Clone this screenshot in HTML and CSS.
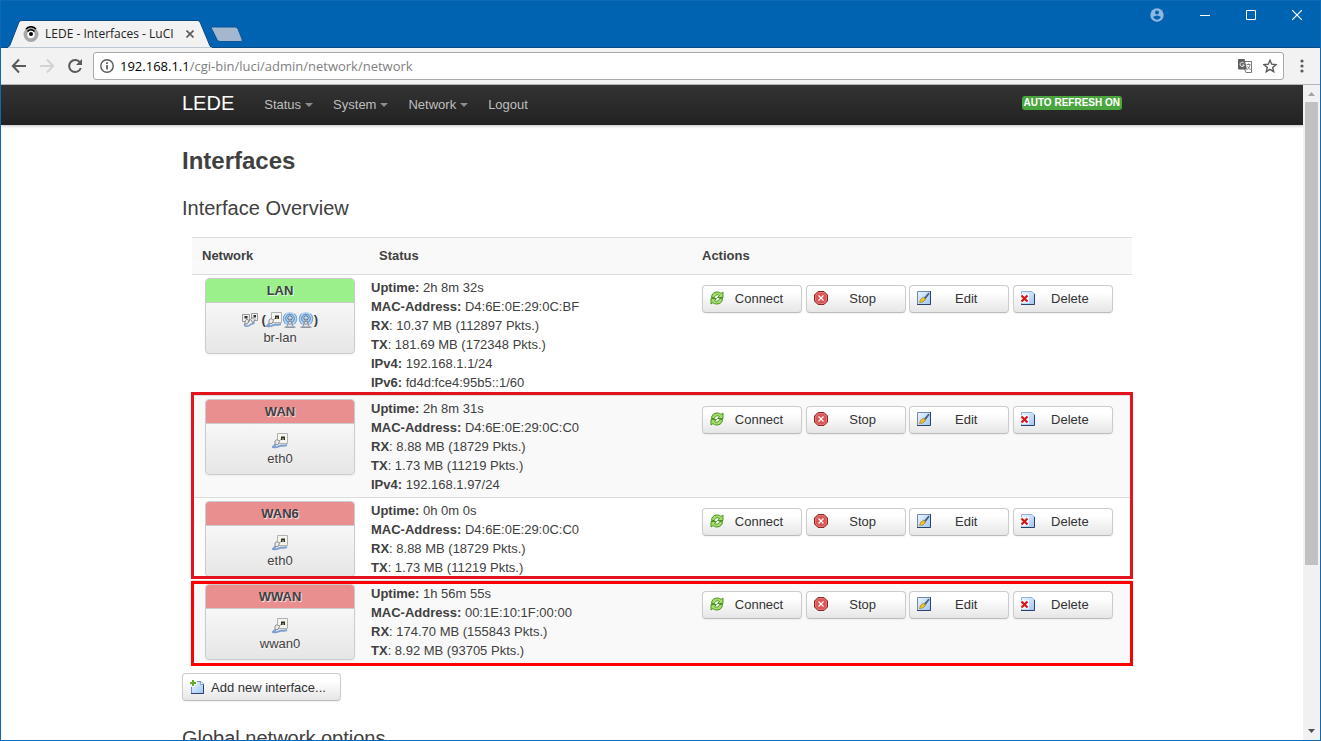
FILE: index.html
```
<!DOCTYPE html>
<html lang="en">
<head>
    <meta charset="UTF-8">
    <title>LEDE - Interfaces - LuCI</title>
    <link rel="stylesheet" href="styles.css">
</head>
<body>

<svg class="sprite" aria-hidden="true">
    <linearGradient id="doc-fill" x1="0" y1="0" x2="1" y2="1">
        <stop offset="0" stop-color="#eef6ff"/>
        <stop offset="1" stop-color="#9cc6f5"/>
    </linearGradient>
    <symbol id="reload" viewBox="0 0 16 16">
        <path d="M2.500 7.500C2.500 4 5 2 8 2c2 0 3 .5 4 1.500l2-1.500v5.500H8.500l2-2C8.500 4 6 5 5.500 7.500z" fill="#a5dc6c" stroke="#4a9420"/>
        <path d="M13.500 8.500C13.500 12 11 14 8 14c-2 0-3-.5-4-1.500L2 14V8.500h5.500l-2 2c2 1.500 4.500.5 5-2z" fill="#a5dc6c" stroke="#4a9420"/>
    </symbol>
    <symbol id="stop" viewBox="0 0 16 16">
        <path d="M5 1.500h6L14.500 5v6L11 14.500H5L1.500 11V5z" fill="#d95757" stroke="#8e2525"/>
        <path d="M5.500 2.500h5L13.500 5.500v5L10.500 13.500h-5L2.500 10.500v-5z" fill="none" stroke="#e88f8f" stroke-width=".6"/>
        <path d="M5.500 5.500l5 5m0-5l-5 5" stroke="#fff" stroke-width="1.200"/>
    </symbol>
    <symbol id="edit" viewBox="0 0 16 16">
        <path d="M1.500 1.500h13v13h-13z" fill="url(#doc-fill)" stroke="#7089ad"/>
        <path d="M14.500 1v13.500H1" fill="none" stroke="#2c4268"/>
        <path d="M6.500 9.500L12.500 2.500l1.200 1.200L8 11z" fill="#4a5f80"/>
        <path d="M3.500 12.500l1.200-3.300L7.500 7l2 2-2.500 3z" fill="#f3c22c" stroke="#9b7416" stroke-width=".6"/>
    </symbol>
    <symbol id="delete" viewBox="0 0 16 16">
        <path d="M1.500 1.500H12l2.500 2.500v10.500h-13z" fill="url(#doc-fill)" stroke="#8fb0d8"/>
        <path d="M14.500 4v10.500H1" fill="none" stroke="#2c4268"/>
        <path d="M0 4h9v9H0z" fill="#fff" opacity=".7"/>
        <path d="M1.500 5.500l6 6m0-6l-6 6" stroke="#d41919" stroke-width="2.200"/>
    </symbol>
    <symbol id="add" viewBox="0 0 16 16">
        <path d="M2.500 2.500h9.500l2.500 2.500v9.500h-12z" fill="url(#doc-fill)" stroke="#6b8fc0"/>
        <path d="M14.500 5v9.500H2" fill="none" stroke="#2c4268"/>
        <path d="M11.500 2.500v3h3" fill="#fff" stroke="#6b8fc0" stroke-width=".8"/>
        <path d="M4 0v8M0 4h8" stroke="#fff" stroke-width="4"/>
        <path d="M4 1v6M1 4h6" stroke="#5fb01c" stroke-width="2"/>
    </symbol>
    <symbol id="ethernet" viewBox="0 0 16 16">
        <path d="M5.500 .5h10v10h-10z" fill="#f4f4f0" stroke="#b0b0ac"/>
        <path d="M9 3.500h4V7H9z" fill="#33322a"/>
        <path d="M10 5h2v2h-2z" fill="#8a8250"/>
        <path d="M3 8l2-1.500 2.500 2-1.500 3H3z" fill="#ececec" stroke="#777" stroke-width=".8"/>
        <path d="M7 8L9 6.500" stroke="#999"/>
        <path d="M3.500 11.500L1 14c4 1.500 6-1.500 9-1.500 2 .5 3.500 0 5-.5" fill="none" stroke="#7d9fce" stroke-width="2"/>
    </symbol>
    <symbol id="bridge" viewBox="0 0 16 16">
        <path d="M.5 2.500h7v7h-7zM9.500 1.500h6v7h-6z" fill="#f0f0ee" stroke="#999"/>
        <path d="M2.500 4h3v2.500h-3zM11.500 3h2.500v2.500h-2.500z" fill="#333"/>
        <path d="M3 9l2-2 2 1.500-1.500 3.500H3zM8.500 7.500L11 5.500l2 2-2 3.500z" fill="#e4e4e4" stroke="#777" stroke-width=".8"/>
        <path d="M3 11.500c-2 3 3 3.500 5 1.500s5-.5 3.500-3.500" fill="none" stroke="#7d9fce" stroke-width="1.600"/>
    </symbol>
    <symbol id="wifi" viewBox="0 0 16 16">
        <circle cx="8" cy="7" r="7" fill="#b4d2ee"/>
        <path d="M3.500 1.500q-4.500 5 0 10.500M12.500 1.500q4.500 5 0 10.500" fill="none" stroke="#6c9fd2"/>
        <circle cx="8" cy="6.500" r="4.300" fill="none" stroke="#4d86c4"/>
        <circle cx="8" cy="6" r="2.200" fill="#dceaf7" stroke="#4a6b94"/>
        <path d="M8 6.500L4.500 15.500h7zM5.500 12h5M6.500 9.500h3" fill="#dfe3e8" stroke="#7a838e" stroke-width=".8"/>
        <path d="M2.500 15.200h11" stroke="#8994a0" stroke-width="1.200"/>
    </symbol>
</svg>

<header class="titlebar">
    <div class="tab">
        <svg class="tab-shape" viewBox="0 0 206 28">
            <path d="M0 28L1 27Q2 27 3 25L12 2Q13 .5 15 .5H190Q192 .5 193 2L203 26Q204 27.500 206 28z" fill="#f2f2f2" stroke="#0a4b85"/>
            <path d="M1 28h204" stroke="#f2f2f2"/>
        </svg>
        <svg class="favicon" viewBox="0 0 16 16">
            <circle cx="8" cy="8.500" r="7.500" fill="#a8a8ab"/>
            <circle cx="8" cy="8.500" r="3.700" fill="#fff"/>
            <circle cx="8" cy="8" r="2" fill="#000"/>
            <path d="M4.500 5.500Q8 2 11.500 5.500M3 3Q8-1.500 13 3" fill="none" stroke="#000" stroke-width="1.600"/>
        </svg>
        <span class="tab-title">LEDE - Interfaces - LuCI</span>
        <button class="tab-close" aria-label="Close tab">
            <svg width="8" height="8" viewBox="0 0 8 8"><path d="M.5.5l7 7m0-7l-7 7" stroke="#5a5a5a" stroke-width="1.600"/></svg>
        </button>
    </div>
    <button class="new-tab" aria-label="New tab">
        <svg width="34" height="17" viewBox="0 0 34 17"><path d="M2 1H25Q27 1 28 3L32 13Q33 15.500 31 15.500H10Q8 15.500 7 13.500L1.500 2.500Q1 1 2 1z" fill="#a3b8cf" stroke="#0c5598"/></svg>
    </button>
    <div class="window-controls">
        <button class="account" aria-label="Account">
            <svg width="14" height="14" viewBox="0 0 14 14"><circle cx="7" cy="7" r="6.700" fill="#8fb8de"/><circle cx="7" cy="4.500" r="2" fill="#0063b1"/><path d="M3 9q4-3 8 0q-1.500 2.700-4 2.700T3 9z" fill="#0063b1"/></svg>
        </button>
        <button aria-label="Minimize">
            <svg width="10" height="10" viewBox="0 0 10 10"><path d="M0 5.500h10" stroke="#fff"/></svg>
        </button>
        <button aria-label="Maximize">
            <svg width="10" height="10" viewBox="0 0 10 10"><path d="M.5.5h9v9h-9z" fill="none" stroke="#fff"/></svg>
        </button>
        <button aria-label="Close">
            <svg width="10" height="10" viewBox="0 0 10 10"><path d="M0 0l10 10m0-10L0 10" stroke="#fff" stroke-width="1.200"/></svg>
        </button>
    </div>
</header>

<div class="toolbar">
    <button class="tool" aria-label="Back">
        <svg width="16" height="16" viewBox="0 0 16 16"><path d="M15 8H2M8 1.500L1.800 8 8 14.500" fill="none" stroke="#5a5a5a" stroke-width="2"/></svg>
    </button>
    <button class="tool" aria-label="Forward" disabled>
        <svg width="16" height="16" viewBox="0 0 16 16"><path d="M1 8h13M8 1.500L14.200 8 8 14.500" fill="none" stroke="#d3d3d3" stroke-width="2"/></svg>
    </button>
    <button class="tool" aria-label="Reload">
        <svg width="16" height="16" viewBox="0 0 16 16"><path d="M13 4.500A6 6 0 1 0 13.800 10" fill="none" stroke="#5a5a5a" stroke-width="2"/><path d="M15 1v6H9z" fill="#5a5a5a"/></svg>
    </button>
    <div class="address">
        <svg class="info" width="14" height="14" viewBox="0 0 14 14"><circle cx="7" cy="7" r="6.200" fill="none" stroke="#5a5a5a" stroke-width="1.400"/><path d="M7 6v4.500M7 3.300v1.600" stroke="#5a5a5a" stroke-width="1.700"/></svg>
        <label class="host" for="url">192.168.1.1</label>
        <input class="path" id="url" type="text" value="/cgi-bin/luci/admin/network/network">
        <button class="address-button" aria-label="Translate">
            <svg width="14" height="14" viewBox="0 0 14 14"><path d="M6 2.500h7.500v11H8L6.500 10" fill="#fff" stroke="#777"/><path d="M1 0h5.500L9 10.500H1q-1 0-1-1V1q0-1 1-1z" fill="#5f5f5f"/><path d="M6 4.300A2.100 2.100 0 1 0 6.200 6H4.500" fill="none" stroke="#fff"/><path d="M8.500 5.500h4M10.500 4.500v1M12 6q-.5 3-3 4.500M9.500 7.500l3 3.500" fill="none" stroke="#777" stroke-width=".9"/></svg>
        </button>
        <button class="address-button" aria-label="Bookmark">
            <svg width="14" height="14" viewBox="0 0 14 14"><path d="M7 1.200l1.700 4 4.300.4-3.300 2.800 1 4.300L7 10.400l-3.700 2.300 1-4.300L1 5.600l4.300-.4z" fill="none" stroke="#5a5a5a" stroke-width="1.400"/></svg>
        </button>
    </div>
    <button class="menu" aria-label="Menu">
        <svg width="4" height="14" viewBox="0 0 4 14"><circle cx="2" cy="2" r="1.600" fill="#5a5a5a"/><circle cx="2" cy="7" r="1.600" fill="#5a5a5a"/><circle cx="2" cy="12" r="1.600" fill="#5a5a5a"/></svg>
    </button>
</div>

<div class="viewport">
    <div class="page">
        <nav class="navbar">
            <div class="container nav-inner">
                <a class="brand" href="#">LEDE</a>
                <a class="nav-link dropdown" href="#">Status</a>
                <a class="nav-link dropdown" href="#">System</a>
                <a class="nav-link dropdown" href="#">Network</a>
                <a class="nav-link" href="#">Logout</a>
                <button class="refresh">AUTO REFRESH ON</button>
            </div>
        </nav>

        <main class="container">
            <h2>Interfaces</h2>
            <h3>Interface Overview</h3>
            <table class="interfaces">
                <thead>
                <tr>
                    <th class="col-network">Network</th>
                    <th class="col-status">Status</th>
                    <th>Actions</th>
                </tr>
                </thead>
                <tbody>
                <tr>
                    <td>
                        <div class="ifacebox">
                            <div class="ifacebox-head lan">LAN</div>
                            <div class="ifacebox-body">
                                <div class="devices"><svg class="icon"><use href="#bridge"/></svg>&nbsp;<b>(</b><svg class="icon"><use href="#ethernet"/></svg><svg class="icon"><use href="#wifi"/></svg><svg class="icon"><use href="#wifi"/></svg><b>)</b></div>
                                br-lan
                            </div>
                        </div>
                    </td>
                    <td>
                        <b>Uptime:</b> 2h 8m 32s<br>
                        <b>MAC-Address:</b> D4:6E:0E:29:0C:BF<br>
                        <b>RX</b>: 10.37 MB (112897 Pkts.)<br>
                        <b>TX</b>: 181.69 MB (172348 Pkts.)<br>
                        <b>IPv4:</b> 192.168.1.1/24<br>
                        <b>IPv6:</b> fd4d:fce4:95b5::1/60
                    </td>
                    <td class="actions">
                        <button class="btn"><svg class="icon"><use href="#reload"/></svg><span>Connect</span></button>
                        <button class="btn"><svg class="icon"><use href="#stop"/></svg><span>Stop</span></button>
                        <button class="btn"><svg class="icon"><use href="#edit"/></svg><span>Edit</span></button>
                        <button class="btn"><svg class="icon"><use href="#delete"/></svg><span>Delete</span></button>
                    </td>
                </tr>
                </tbody>
                <tbody class="marked marked-wan">
                <tr class="odd">
                    <td>
                        <div class="ifacebox">
                            <div class="ifacebox-head wan">WAN</div>
                            <div class="ifacebox-body">
                                <div class="devices"><svg class="icon"><use href="#ethernet"/></svg></div>
                                eth0
                            </div>
                        </div>
                    </td>
                    <td>
                        <b>Uptime:</b> 2h 8m 31s<br>
                        <b>MAC-Address:</b> D4:6E:0E:29:0C:C0<br>
                        <b>RX</b>: 8.88 MB (18729 Pkts.)<br>
                        <b>TX</b>: 1.73 MB (11219 Pkts.)<br>
                        <b>IPv4:</b> 192.168.1.97/24
                    </td>
                    <td class="actions">
                        <button class="btn"><svg class="icon"><use href="#reload"/></svg><span>Connect</span></button>
                        <button class="btn"><svg class="icon"><use href="#stop"/></svg><span>Stop</span></button>
                        <button class="btn"><svg class="icon"><use href="#edit"/></svg><span>Edit</span></button>
                        <button class="btn"><svg class="icon"><use href="#delete"/></svg><span>Delete</span></button>
                    </td>
                </tr>
                <tr>
                    <td>
                        <div class="ifacebox">
                            <div class="ifacebox-head wan">WAN6</div>
                            <div class="ifacebox-body">
                                <div class="devices"><svg class="icon"><use href="#ethernet"/></svg></div>
                                eth0
                            </div>
                        </div>
                    </td>
                    <td>
                        <b>Uptime:</b> 0h 0m 0s<br>
                        <b>MAC-Address:</b> D4:6E:0E:29:0C:C0<br>
                        <b>RX</b>: 8.88 MB (18729 Pkts.)<br>
                        <b>TX</b>: 1.73 MB (11219 Pkts.)
                    </td>
                    <td class="actions">
                        <button class="btn"><svg class="icon"><use href="#reload"/></svg><span>Connect</span></button>
                        <button class="btn"><svg class="icon"><use href="#stop"/></svg><span>Stop</span></button>
                        <button class="btn"><svg class="icon"><use href="#edit"/></svg><span>Edit</span></button>
                        <button class="btn"><svg class="icon"><use href="#delete"/></svg><span>Delete</span></button>
                    </td>
                </tr>
                </tbody>
                <tbody class="marked marked-wwan">
                <tr class="odd">
                    <td>
                        <div class="ifacebox">
                            <div class="ifacebox-head wan">WWAN</div>
                            <div class="ifacebox-body">
                                <div class="devices"><svg class="icon"><use href="#ethernet"/></svg></div>
                                wwan0
                            </div>
                        </div>
                    </td>
                    <td>
                        <b>Uptime:</b> 1h 56m 55s<br>
                        <b>MAC-Address:</b> 00:1E:10:1F:00:00<br>
                        <b>RX</b>: 174.70 MB (155843 Pkts.)<br>
                        <b>TX</b>: 8.92 MB (93705 Pkts.)
                    </td>
                    <td class="actions">
                        <button class="btn"><svg class="icon"><use href="#reload"/></svg><span>Connect</span></button>
                        <button class="btn"><svg class="icon"><use href="#stop"/></svg><span>Stop</span></button>
                        <button class="btn"><svg class="icon"><use href="#edit"/></svg><span>Edit</span></button>
                        <button class="btn"><svg class="icon"><use href="#delete"/></svg><span>Delete</span></button>
                    </td>
                </tr>
                </tbody>
            </table>
            <button class="btn btn-add"><svg class="icon"><use href="#add"/></svg><span>Add new interface...</span></button>
            <h3>Global network options</h3>
        </main>
    </div>
    <div class="scrollbar">
        <svg width="17" height="17" viewBox="0 0 17 17"><path d="M5 11l3.500-4 3.500 4z" fill="#a3a3a3"/></svg>
        <div class="track">
            <div class="thumb"></div>
        </div>
        <svg width="17" height="17" viewBox="0 0 17 17"><path d="M5 6l3.500 4L12 6z" fill="#505050"/></svg>
    </div>
</div>

</body>
</html>
```
FILE: styles.css
```
* {
    box-sizing: border-box;
}

body {
    margin: 0;
    height: 100vh;
    display: flex;
    flex-direction: column;
    overflow: hidden;
    border: 1px solid #0e69b4;
    font: 13px/19px "Liberation Sans", Arial, sans-serif;
    color: #404040;
    background: #fff;
}

button {
    font: inherit;
    color: inherit;
    margin: 0;
    padding: 0;
    border: 0;
    background: none;
}

.sprite {
    position: absolute;
    width: 0;
    height: 0;
}

/* browser window */
.titlebar {
    display: flex;
    flex: none;
    height: 47px;
    background: #0063b1;
    border-bottom: 1px solid #0a4b85;
}

.tab {
    position: relative;
    display: flex;
    align-items: center;
    width: 206px;
    height: 28px;
    margin: 19px 0 0 6px;
    padding: 0 19px 0 16px;
    font: 12px/16px "Open Sans", "Noto Sans", sans-serif;
    color: #222;
}

.tab-shape {
    position: absolute;
    inset: 0;
}

.favicon {
    position: relative;
    width: 16px;
    height: 16px;
    margin-right: 6px;
}

.tab-title {
    position: relative;
    flex: 1;
    white-space: nowrap;
}

.tab-close {
    position: relative;
    display: flex;
}

.new-tab {
    display: flex;
    align-self: flex-end;
    margin: 0 0 4px -3px;
}

.window-controls {
    display: flex;
    margin-left: auto;
    height: 28px;
}

.window-controls button {
    display: flex;
    align-items: center;
    justify-content: center;
    width: 46px;
}

.window-controls .account {
    width: 50px;
}

.toolbar {
    display: flex;
    flex: none;
    align-items: center;
    height: 37px;
    padding-left: 4px;
    background: #f2f2f2;
    border-bottom: 1px solid #b5b5b5;
}

.tool {
    display: flex;
    justify-content: center;
    width: 28px;
}

.address {
    display: flex;
    flex: 1;
    align-items: center;
    height: 28px;
    margin-left: 4px;
    padding: 0 6px;
    background: #fff;
    border: 1px solid #a9a9a9;
    border-radius: 3px;
    font: 13px/18px "Open Sans", "Noto Sans", sans-serif;
}

.info {
    margin-right: 6px;
}

.host {
    color: #000;
}

.path {
    flex: 1;
    padding: 0;
    border: 0;
    outline: 0;
    font: inherit;
    color: #808080;
}

.address-button {
    display: flex;
    margin-left: 11px;
}

.menu {
    display: flex;
    justify-content: center;
    width: 36px;
}

/* page */
.viewport {
    display: flex;
    flex: 1;
    min-height: 0;
}

.page {
    flex: 1;
    overflow: hidden;
}

.container {
    width: 940px;
    margin: 0 auto;
}

.navbar {
    height: 40px;
    background: linear-gradient(#333, #222);
    box-shadow: 0 1px 3px rgba(0, 0, 0, .25);
}

.nav-inner {
    display: flex;
    align-items: center;
    height: 36px;
}

.brand {
    margin-right: 20px;
    font-size: 20px;
    color: #fff;
    text-decoration: none;
}

.nav-link {
    padding: 2px 10px 0;
    color: #bfbfbf;
    text-decoration: none;
}

.dropdown::after {
    content: "";
    display: inline-block;
    vertical-align: middle;
    margin-left: 4px;
    border: 4px solid transparent;
    border-top-color: #8c8c8c;
    border-bottom: 0;
}

.refresh {
    margin-left: auto;
    padding: 0 2px;
    border-radius: 3px;
    background: #4ba53f;
    color: #fff;
    font-size: 10px;
    font-weight: bold;
    line-height: 14px;
}

h2 {
    margin: 18px 0 0;
    font-size: 24px;
    line-height: 36px;
}

h3 {
    margin: 0;
    padding-top: 11px;
    font-size: 20px;
    font-weight: normal;
    line-height: 36px;
}

.interfaces {
    width: 100%;
    margin: 11px 0 10px 10px;
    border-spacing: 0;
    table-layout: fixed;
}

.interfaces th {
    padding: 9px 10px;
    text-align: left;
    line-height: 18px;
    border-top: 1px solid #ddd;
    background: #f9f9f9;
}

.interfaces td {
    padding: 3px 2px;
    vertical-align: top;
    border-top: 1px solid #ddd;
}

.odd {
    background: #f9f9f9;
}

.col-network {
    width: 177px;
}

.col-status {
    width: 323px;
}

.interfaces .actions {
    padding: 10px 0 0 10px;
}

/* frames around the uplink interfaces */
.marked {
    position: relative;
}

.marked::after {
    content: "";
    position: absolute;
    inset: -3px -1px 1px;
    border: 3px solid #e3131d;
    pointer-events: none;
}

.marked-wwan::after {
    inset: 1px -1px -3px;
    border-color: #f00;
}

.ifacebox {
    width: 150px;
    margin-left: 11px;
    border: 1px solid #ccc;
    border-radius: 4px;
    overflow: hidden;
    text-align: center;
    background: linear-gradient(#fff, #e6e6e6);
    text-shadow: 0 1px 1px rgba(255, 255, 255, .75);
    box-shadow: 0 1px 2px rgba(0, 0, 0, .05);
}

.ifacebox-head {
    line-height: 23px;
    font-weight: bold;
    border-bottom: 1px solid #ccc;
    text-shadow: 1px 1px 1px rgba(255, 255, 255, .8);
}

.lan {
    background: #9bf08b;
}

.wan {
    background: #e98f8f;
}

.ifacebox-body {
    padding: 8px 0 6px;
}

.devices {
    display: flex;
    align-items: center;
    justify-content: center;
    height: 17px;
}

.icon {
    flex: none;
    width: 16px;
    height: 16px;
}

.btn {
    display: inline-flex;
    align-items: center;
    width: 100px;
    height: 28px;
    padding: 0 8px 2px 6px;
    border: 1px solid #ccc;
    border-bottom-color: #bbb;
    border-radius: 4px;
    background: linear-gradient(#fff 25%, #e6e6e6);
    box-shadow: 0 1px 2px rgba(0, 0, 0, .05);
    color: #333;
}

.btn span {
    flex: 1;
}

.btn-add {
    width: auto;
    margin-bottom: 8px;
    padding: 0 14px 0 6px;
}

.btn-add span {
    padding-left: 6px;
}

.scrollbar {
    display: flex;
    flex: none;
    flex-direction: column;
    width: 17px;
    background: #f1f1f1;
}

.track {
    flex: 1;
    padding: 0 2px;
}

.thumb {
    height: 74.5%;
    background: #c1c1c1;
}
```
